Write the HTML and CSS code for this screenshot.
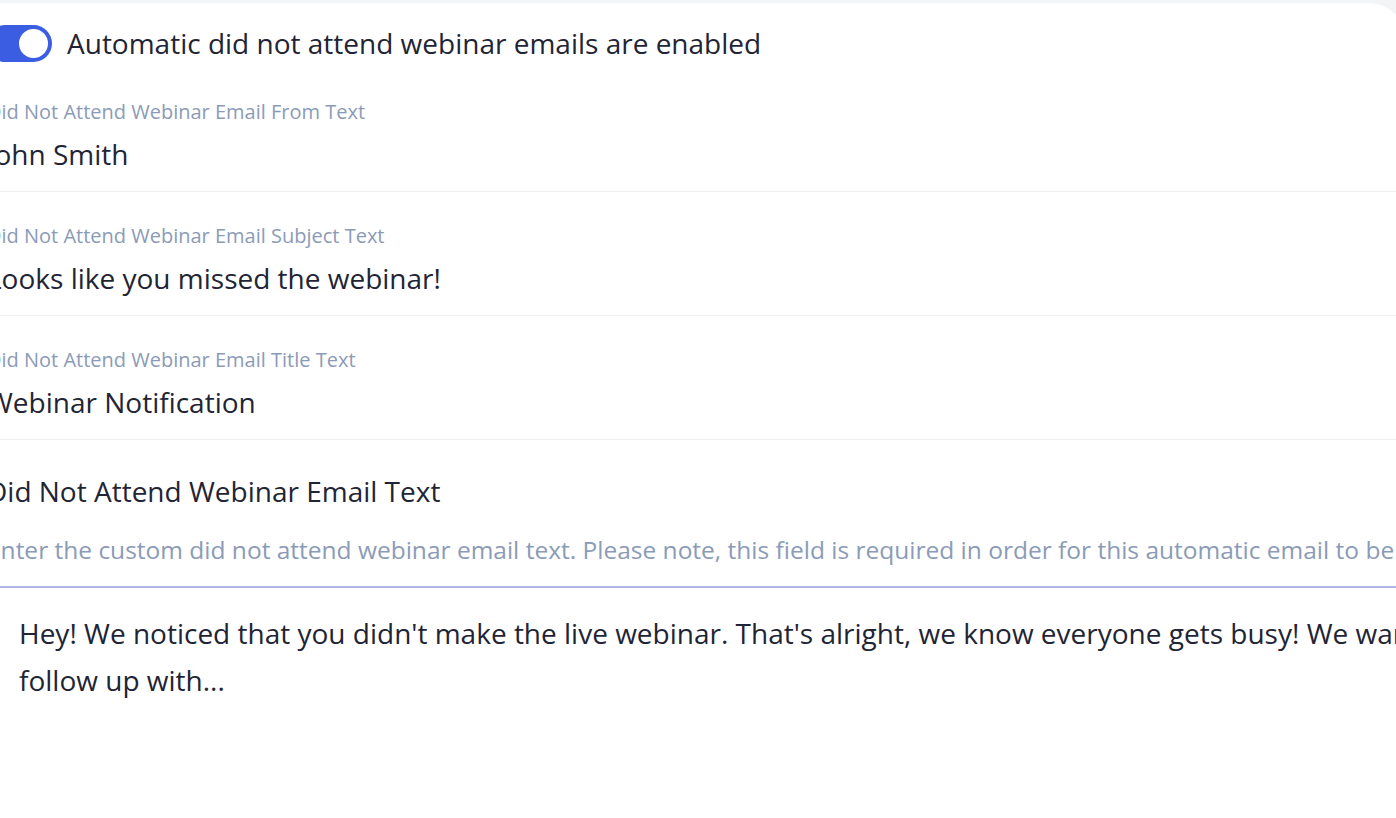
FILE: index.html
```html
<!DOCTYPE html>
<html lang="en">
<head>
<meta charset="utf-8">
<title>Did not attend webinar emails</title>
<link rel="stylesheet" href="styles.css">
</head>
<body>
<div class="page">
  <section class="card">
    <div class="toggle-row">
      <span class="toggle"><span class="knob"></span></span>
      <span class="toggle-text">Automatic did not attend webinar emails are enabled</span>
    </div>

    <div class="field">
      <div class="label">Did Not Attend Webinar Email From Text</div>
      <div class="value">John Smith</div>
    </div>
    <div class="field">
      <div class="label">Did Not Attend Webinar Email Subject Text</div>
      <div class="value">Looks like you missed the webinar!</div>
    </div>
    <div class="field">
      <div class="label">Did Not Attend Webinar Email Title Text</div>
      <div class="value">Webinar Notification</div>
    </div>

    <div class="body-section">
      <div class="heading">Did Not Attend Webinar Email Text</div>
      <div class="help">Enter the custom did not attend webinar email text. Please note, this field is required in order for this automatic email to be sent.</div>
      <div class="editor">Hey! We noticed that you didn't make the live webinar. That's alright, we know everyone gets busy! We wanted to follow up with...</div>
    </div>
  </section>
</div>
</body>
</html>
```

FILE: styles.css
```css
html, body {
  margin: 0;
  padding: 0;
  background: #f3f4f6;
  overflow: hidden;
}

body {
  font-family: "Open Sans", "Noto Sans", sans-serif;
  color: #1f2535;
}

.page {
  width: 1396px;
  height: 818px;
  overflow: hidden;
  padding-top: 3px;
  box-sizing: border-box;
}

.card {
  background: #ffffff;
  margin-left: -13px;
  width: 1418px;
  height: 900px;
  border-top-right-radius: 36px;
  padding-top: 20px;
  box-sizing: border-box;
}

.toggle-row {
  display: flex;
  align-items: center;
  height: 40px;
  margin-bottom: 5px;
  gap: 15px;
}

.toggle {
  width: 65px;
  height: 37px;
  border-radius: 19px;
  background: #3a5de2;
  display: flex;
  align-items: center;
  justify-content: flex-end;
  padding-right: 4px;
  box-sizing: border-box;
  flex-shrink: 0;
}

.knob {
  width: 29px;
  height: 29px;
  border-radius: 50%;
  background: #ffffff;
}

.toggle-text {
  font-size: 28px;
  line-height: 40px;
  white-space: nowrap;
}

.field {
  padding: 30px 0 17px;
  border-bottom: 1px solid #eef0f3;
}

.label {
  font-size: 20px;
  line-height: 28px;
  color: #8b9bb7;
  white-space: nowrap;
}

.value {
  margin-top: 8px;
  font-size: 28px;
  line-height: 40px;
  white-space: nowrap;
}

.body-section {
  padding-top: 36px;
}

.heading {
  font-size: 28px;
  line-height: 30px;
  white-space: nowrap;
}

.help {
  margin-top: 29px;
  font-size: 24.5px;
  line-height: 30px;
  color: #8b9bb7;
  white-space: nowrap;
}

.editor {
  margin-top: 21px;
  border-top: 2px solid #aab8e3;
  padding: 22px 0 0 32px;
  font-size: 28px;
  line-height: 47px;
  width: 1572px;
  box-sizing: border-box;
}
```
